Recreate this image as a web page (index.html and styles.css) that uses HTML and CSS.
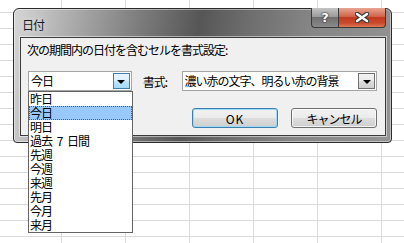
FILE: index.html
```html
<!DOCTYPE html>
<html lang="ja">
<head>
  <meta charset="UTF-8">
  <title>日付</title>
  <link rel="stylesheet" href="styles.css">
</head>

<body>
  <div class="sheet">
    <div class="dialog">
      <!-- TITLE BAR -->
      <div class="titlebar">
        <span class="title">日付</span>
        <div class="caption-buttons">
          <div class="cap-btn help">?</div>
          <div class="cap-btn close">
            <svg width="14" height="11" viewBox="0 0 14 11">
              <path d="M2 2 L12 9 M12 2 L2 9" stroke="#3b3b3b" stroke-width="4.6" stroke-linecap="round"/>
              <path d="M2 2 L12 9 M12 2 L2 9" stroke="#ffffff" stroke-width="2.4" stroke-linecap="round"/>
            </svg>
          </div>
        </div>
      </div>

      <!-- CLIENT AREA -->
      <div class="client">
        <div class="prompt">次の期間内の日付を含むセルを書式設定:</div>

        <div class="row">
          <div class="combo combo-period">
            <span class="combo-text">今日</span>
            <span class="drop-btn hot"><i class="arrow"></i></span>

            <!-- open list -->
            <ul class="droplist">
              <li>昨日</li>
              <li class="selected">今日</li>
              <li>明日</li>
              <li class="spaced">過去 7 日間</li>
              <li>先週</li>
              <li>今週</li>
              <li>来週</li>
              <li>先月</li>
              <li>今月</li>
              <li>来月</li>
            </ul>
          </div>

          <span class="fmt-label">書式:</span>

          <div class="combo combo-format">
            <span class="combo-text">濃い赤の文字、明るい赤の背景</span>
            <span class="drop-btn"><i class="arrow"></i></span>
          </div>
        </div>

        <div class="actions">
          <button class="btn btn-default">OK</button>
          <button class="btn">キャンセル</button>
        </div>
      </div>
    </div>
  </div>
</body>
</html>
```

FILE: styles.css
```css
/* ===============================
   BASE: worksheet grid behind
=============================== */
html, body {
  margin: 0;
  padding: 0;
  width: 100%;
  height: 100%;
}
body {
  font-family: "Noto Sans CJK JP", "Noto Sans", sans-serif;
  font-size: 12px;
  letter-spacing: -1px;
  color: #000;
  background-color: #fff;
  background-image:
    linear-gradient(to right, #dadada 1px, transparent 1px),
    linear-gradient(to bottom, #dadada 1px, transparent 1px);
  background-size: 64px 16px, 64px 16px;
  background-position: 61px 0, 0 12px;
}

.sheet {
  padding: 8px 0 0 13px;
}

/* ===============================
   DIALOG FRAME
=============================== */
.dialog {
  width: 379px;
  height: 135px;
  box-sizing: border-box;
  border: 1px solid #2c2c2c;
  border-radius: 6px 6px 4px 4px;
  padding: 0 5px 6px 6px;
  background: linear-gradient(100deg, #d6d6d6 0%, #aeaeae 14%, #7c7c7c 32%, #565656 47%, #6c6c6c 58%, #868686 75%, #939393 100%);
  box-shadow: inset 0 0 0 1px rgba(255, 255, 255, 0.45);
}

.titlebar {
  display: flex;
  justify-content: space-between;
  align-items: flex-start;
  height: 28px;
}
.title {
  padding: 8px 0 0 2px;
  line-height: 16px;
  color: #1a1a1a;
  text-shadow: 0 0 6px rgba(255, 255, 255, 0.8);
}

.caption-buttons {
  display: flex;
  margin-top: -1px;
}
.cap-btn {
  display: flex;
  justify-content: center;
  align-items: center;
  height: 20px;
  box-sizing: border-box;
  border: 1px solid #3a3a3a;
  border-top: none;
}
.help {
  width: 27px;
  border-right: none;
  border-radius: 0 0 0 4px;
  background: linear-gradient(#c4c4c4, #9c9c9c 45%, #707070 50%, #8a8a8a);
  font-family: "DejaVu Sans", sans-serif;
  font-weight: bold;
  font-size: 13px;
  letter-spacing: 0;
  color: #fff;
  text-shadow: 0 0 1px #333, 0 0 1px #333, 0 0 2px #333;
}
.close {
  width: 48px;
  border-radius: 0 0 4px 0;
  background: linear-gradient(#e9a593, #d0644a 45%, #c33a1f 50%, #c84a2c 80%, #e07a55);
}

/* ===============================
   CLIENT AREA
=============================== */
.client {
  height: 99px;
  box-sizing: border-box;
  border: 1px solid #3a3a3a;
  background: #f0f0f0;
  padding: 5px 8px 0 6px;
  box-shadow: 0 0 0 1px rgba(255, 255, 255, 0.5);
}
.prompt {
  line-height: 14px;
}

.row {
  display: flex;
  align-items: center;
  margin-top: 14px;
  height: 20px;
}

.combo {
  position: relative;
  display: flex;
  align-items: center;
  justify-content: space-between;
  height: 20px;
  box-sizing: border-box;
  border: 1px solid #a5a5a5;
  background: #fff;
}
.combo-text {
  padding-left: 2px;
  line-height: 16px;
  white-space: nowrap;
}
.combo-period {
  width: 104px;
  margin-left: 1px;
}
.combo-format {
  width: 196px;
}
.fmt-label {
  width: 39px;
  margin-left: 11px;
}

.drop-btn {
  display: flex;
  justify-content: center;
  align-items: center;
  width: 17px;
  height: 16px;
  margin-right: 1px;
  box-sizing: border-box;
  border: 1px solid #707070;
  background: linear-gradient(#f2f2f2, #ebebeb 50%, #dddddd 50%, #cfcfcf);
}
.drop-btn.hot {
  border-color: #3c7fb1;
  background: linear-gradient(#eaf6fd, #d9f0fc 50%, #bee6fd 50%, #a7d9f5);
}
.arrow {
  width: 0;
  height: 0;
  margin-top: 2px;
  border-left: 4px solid transparent;
  border-right: 4px solid transparent;
  border-top: 4px solid #000;
}

/* open dropdown list */
.droplist {
  position: absolute;
  left: -1px;
  top: 19px;
  width: 105px;
  margin: 0;
  padding: 0;
  list-style: none;
  box-sizing: border-box;
  border: 1px solid #646464;
  background: #fff;
  z-index: 2;
}
.droplist li {
  height: 14px;
  line-height: 14px;
  padding-left: 1px;
  box-sizing: border-box;
  white-space: nowrap;
}
.droplist li.spaced {
  word-spacing: 3px;
}
.droplist li.selected {
  background: #99c9fb;
  outline: 1px dotted #7d5226;
  outline-offset: -1px;
}

/* ===============================
   BUTTONS
=============================== */
.actions {
  display: flex;
  justify-content: flex-end;
  gap: 13px;
  margin-top: 17px;
}
.btn {
  width: 86px;
  height: 20px;
  padding: 0;
  font: inherit;
  letter-spacing: -1px;
  color: #000;
  border: 1px solid #707070;
  border-radius: 3px;
  background: linear-gradient(#f2f2f2, #ebebeb 50%, #dddddd 50%, #cfcfcf);
  box-shadow: inset 0 0 0 1px rgba(255, 255, 255, 0.7);
}
.btn-default {
  letter-spacing: 1px;
  border-color: #3c7fb1;
  box-shadow: inset 0 0 0 1px #9fd9f5;
}
```
